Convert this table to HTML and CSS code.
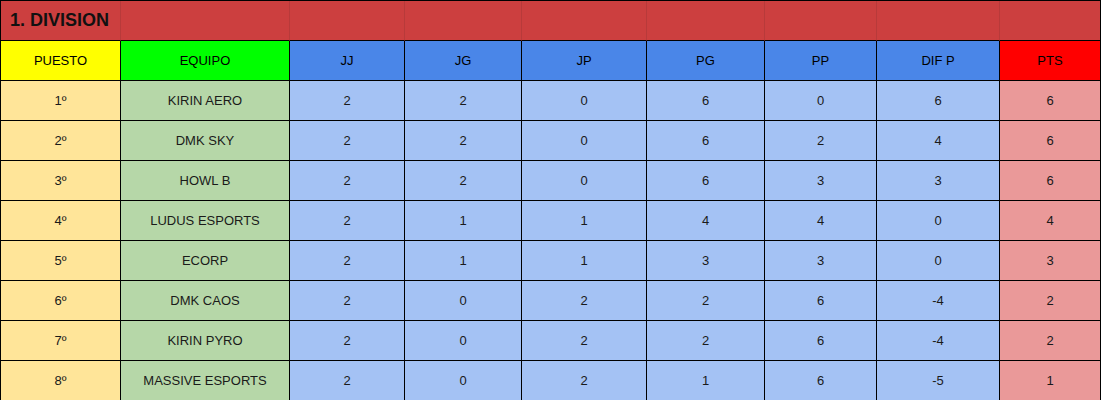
FILE: index.html
```html
<!DOCTYPE html>
<html lang="es">
<head>
<meta charset="utf-8">
<title>1. DIVISION</title>
<link rel="stylesheet" href="styles.css">
</head>
<body>
<div class="sheet">
  <div class="c title"><span class="title-text">1. DIVISION</span></div>
  <div class="c title"></div>
  <div class="c title"></div>
  <div class="c title"></div>
  <div class="c title"></div>
  <div class="c title"></div>
  <div class="c title"></div>
  <div class="c title"></div>
  <div class="c title"></div>

  <div class="c h-pos">PUESTO</div>
  <div class="c h-team">EQUIPO</div>
  <div class="c h-stat">JJ</div>
  <div class="c h-stat">JG</div>
  <div class="c h-stat">JP</div>
  <div class="c h-stat">PG</div>
  <div class="c h-stat">PP</div>
  <div class="c h-stat">DIF P</div>
  <div class="c h-pts">PTS</div>

  <div class="c pos">1º</div><div class="c team">KIRIN AERO</div><div class="c stat">2</div><div class="c stat">2</div><div class="c stat">0</div><div class="c stat">6</div><div class="c stat">0</div><div class="c stat">6</div><div class="c pts">6</div>
  <div class="c pos">2º</div><div class="c team">DMK SKY</div><div class="c stat">2</div><div class="c stat">2</div><div class="c stat">0</div><div class="c stat">6</div><div class="c stat">2</div><div class="c stat">4</div><div class="c pts">6</div>
  <div class="c pos">3º</div><div class="c team">HOWL B</div><div class="c stat">2</div><div class="c stat">2</div><div class="c stat">0</div><div class="c stat">6</div><div class="c stat">3</div><div class="c stat">3</div><div class="c pts">6</div>
  <div class="c pos">4º</div><div class="c team">LUDUS ESPORTS</div><div class="c stat">2</div><div class="c stat">1</div><div class="c stat">1</div><div class="c stat">4</div><div class="c stat">4</div><div class="c stat">0</div><div class="c pts">4</div>
  <div class="c pos">5º</div><div class="c team">ECORP</div><div class="c stat">2</div><div class="c stat">1</div><div class="c stat">1</div><div class="c stat">3</div><div class="c stat">3</div><div class="c stat">0</div><div class="c pts">3</div>
  <div class="c pos">6º</div><div class="c team">DMK CAOS</div><div class="c stat">2</div><div class="c stat">0</div><div class="c stat">2</div><div class="c stat">2</div><div class="c stat">6</div><div class="c stat">-4</div><div class="c pts">2</div>
  <div class="c pos">7º</div><div class="c team">KIRIN PYRO</div><div class="c stat">2</div><div class="c stat">0</div><div class="c stat">2</div><div class="c stat">2</div><div class="c stat">6</div><div class="c stat">-4</div><div class="c pts">2</div>
  <div class="c pos">8º</div><div class="c team">MASSIVE ESPORTS</div><div class="c stat">2</div><div class="c stat">0</div><div class="c stat">2</div><div class="c stat">1</div><div class="c stat">6</div><div class="c stat">-5</div><div class="c pts">1</div>
</div>
</body>
</html>
```

FILE: styles.css
```css
* { box-sizing: border-box; }
html, body { margin: 0; padding: 0; background: #ffffff; }
body { font-family: Arial, "Liberation Sans", sans-serif; }

.sheet {
  display: grid;
  grid-template-columns: 120px 169px 115px 117px 125px 118px 112px 123px 101px;
  grid-auto-rows: 40px;
  width: 1101px;
  border-left: 1px solid #000;
  border-top: 1px solid #000;
}

.c {
  display: flex;
  align-items: center;
  justify-content: center;
  border-right: 1px solid #000;
  border-bottom: 1px solid #000;
  font-size: 13px;
  color: #1a1a1a;
  white-space: nowrap;
  overflow: hidden;
}

.title {
  background: #cc3f3f;
  border-right-color: #b83a3a;
  justify-content: flex-start;
  overflow: visible;
}
.title:nth-child(9) { border-right-color: #000; }
.title-text {
  padding-left: 9px;
  font-size: 18px;
  font-weight: bold;
  color: #111;
}

.h-pos { background: #ffff00; color: #000; }
.h-team { background: #00ff00; color: #000; }
.h-stat { background: #4a86e8; color: #000; }
.h-pts { background: #ff0000; color: #000; }

.pos { background: #ffe599; }
.team { background: #b6d7a8; }
.stat { background: #a4c2f4; }
.pts { background: #ea9999; }
```
